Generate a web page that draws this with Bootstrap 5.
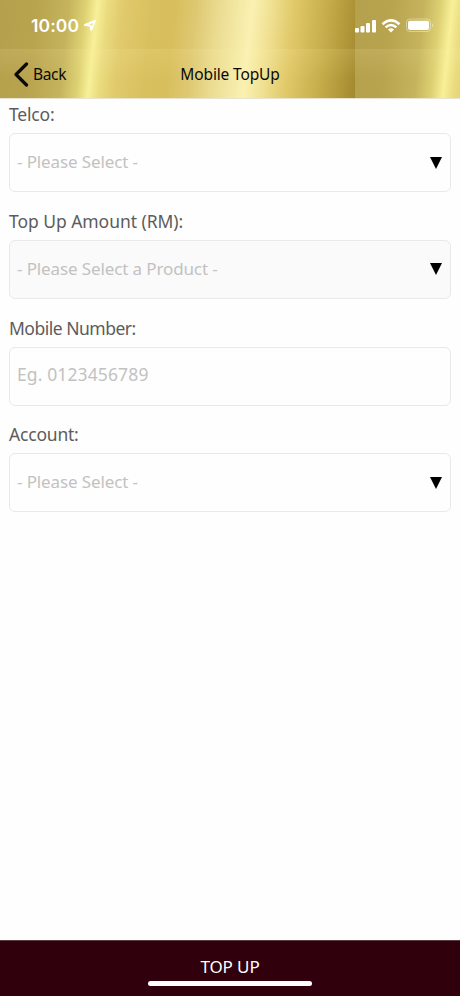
<!DOCTYPE html>
<html lang="en">
<head>
<meta charset="utf-8">
<meta name="viewport" content="width=device-width, initial-scale=1">
<title>Mobile TopUp</title>
<link href="https://cdn.jsdelivr.net/npm/bootstrap@5.3.0/dist/css/bootstrap.min.css" rel="stylesheet">
<style>
body{font-family:"Noto Sans","Open Sans",sans-serif;background:#fefefe;color:#5c5c5c}
.gold{height:99px;background-image:linear-gradient(96deg,#b5a04d 0,#b8a34f 10%,#c5b45d 19%,#ddd072 23.5%,#f8f098 26.8%,#ebdc80 29.5%,#e0ca6c 34%,#d9c05f 42%,#d8be5c 48%,#dec872 54%,#eadb90 60%,#faf1b2 69.3%,#f1e295 74%,#e0c868 81%,#c6ac4a 90%,#a3892e 100%);background-size:355px 100%;border-bottom:1px solid #e9e4cf}
.statusbar{height:49px;padding:2px 26px 0 31px}
.topnav{height:49px;padding-top:3px;color:#0b0905;font-size:15.5px;background:linear-gradient(#fff3b01f,#fff3b000 60%)}
.clock{font:600 17.5px/1 Inter,sans-serif;color:#fff;letter-spacing:.1px}
.back{padding-left:14px;letter-spacing:-.35px}
.nav-heading{letter-spacing:-.15px}
.form-area{padding:3px 9px 0}
.field-label{font-size:17.5px;line-height:25px;letter-spacing:-.2px;margin-bottom:6px}
.label-wide{letter-spacing:-.05px}
.label-tight{letter-spacing:-.5px}
.field + .field{margin-top:16.75px}
.picker,.picker::placeholder{color:#c2c2c2;opacity:1}
.picker{height:59px;background:#fefefe;border:1px solid #e9e9e9;border-radius:6px;font-size:17px;letter-spacing:-.12px;padding:0 8px 2px 7px}
.picker svg{position:relative;top:1px}
.picker-off{background:#fafafa}
input.picker{font-size:17.5px;letter-spacing:.12px;padding-bottom:4px}
.footer-bar{height:56px;background:#31000d;border-top:1px solid #5a3b43;color:#fff;font-size:17px;letter-spacing:-.1px;padding-top:13px}
.home{width:164px;height:5px;background:#fff;margin-top:1px}
</style>
</head>
<body class="d-flex flex-column vh-100 overflow-hidden">
<header class="gold flex-shrink-0">
  <div class="statusbar d-flex align-items-center justify-content-between">
    <div class="d-flex align-items-center gap-1">
      <span class="clock">10:00</span>
      <svg width="14" height="14" viewBox="0 0 14 14" fill="none" stroke="#fff" stroke-width="1.9" stroke-linejoin="round"><path d="M2 6 12 2 8.300 11 7.400 6.600Z"/></svg>
    </div>
    <div class="d-flex align-items-center">
      <svg width="22" height="14" viewBox="0 0 22 14" fill="#fff"><rect x="0" y="9" width="4" height="4.500" rx="1"/><rect x="5.500" y="7" width="4" height="6.500" rx="1"/><rect x="11" y="4" width="4" height="9.500" rx="1"/><rect x="17" y="1" width="4" height="12.500" rx="1"/></svg>
      <svg class="ms-1" width="20" height="14" viewBox="0 0 20 14" fill="none" stroke="#fff" stroke-width="2.500"><path d="M1.500 5.200Q10-2.500 18.500 5.200M4.600 8.400Q10 3.600 15.400 8.400"/><path d="M7 10.600Q10 8 13 10.600L10 13.500Z" fill="#fff" stroke="none"/></svg>
      <svg class="ms-1" width="29" height="15" viewBox="0 0 29 15"><rect x="1.500" y="1" width="24" height="12.500" rx="3.500" fill="none" stroke="#fff" stroke-opacity=".4"/><rect x="3" y="2.700" width="21" height="9.200" rx="1.800" fill="#fff"/><path d="M27 5q2 2.300 0 4.600z" fill="#fff" fill-opacity=".5"/></svg>
    </div>
  </div>
  <nav class="topnav row g-0 align-items-center">
    <div class="col-4 back d-flex align-items-center">
      <svg class="me-1" width="15" height="26" viewBox="0 0 15 26" fill="none" stroke="#0b0905" stroke-width="3.200" stroke-linecap="round" stroke-linejoin="round"><path d="M12.500 2 2 12.500 12.500 23"/></svg>
      <span>Back</span>
    </div>
    <div class="col-4 text-center nav-heading">Mobile TopUp</div>
  </nav>
</header>
<main class="form-area flex-grow-1">
  <div class="field">
    <div class="field-label">Telco:</div>
    <div class="picker d-flex align-items-center justify-content-between"><span>- Please Select -</span><svg width="12" height="12" viewBox="0 0 12 12"><path d="M0 0H12L6 12Z"/></svg></div>
  </div>
  <div class="field">
    <div class="field-label label-wide">Top Up Amount (RM):</div>
    <div class="picker picker-off d-flex align-items-center justify-content-between"><span>- Please Select a Product -</span><svg width="12" height="12" viewBox="0 0 12 12"><path d="M0 0H12L6 12Z"/></svg></div>
  </div>
  <div class="field">
    <label class="field-label label-tight d-block" for="mobile">Mobile Number:</label>
    <input class="picker d-block w-100" id="mobile" type="tel" placeholder="Eg. 0123456789">
  </div>
  <div class="field">
    <div class="field-label">Account:</div>
    <div class="picker d-flex align-items-center justify-content-between"><span>- Please Select -</span><svg width="12" height="12" viewBox="0 0 12 12"><path d="M0 0H12L6 12Z"/></svg></div>
  </div>
</main>
<footer class="footer-bar flex-shrink-0 d-flex flex-column align-items-center">
  <span>TOP UP</span>
  <div class="home rounded-pill flex-shrink-0"></div>
</footer>
</body>
</html>
